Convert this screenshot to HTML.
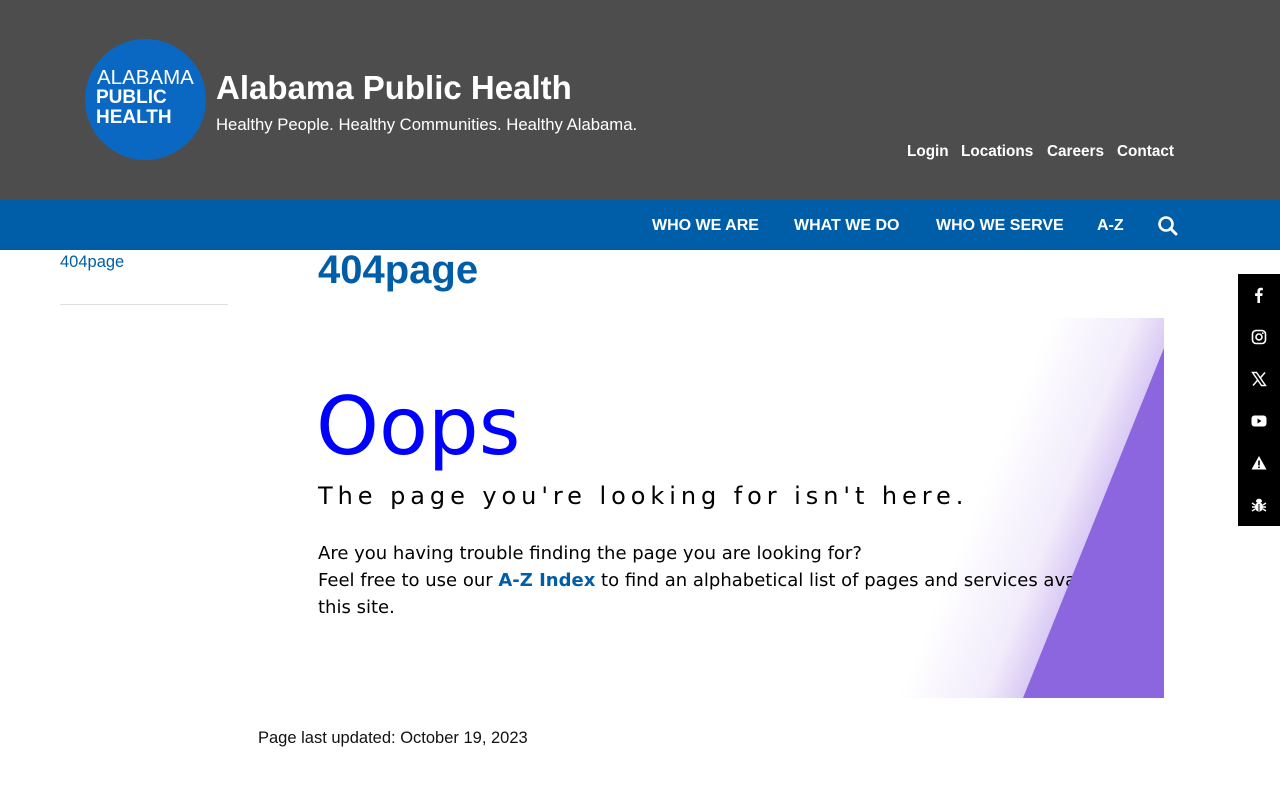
<!DOCTYPE html>
<html><head><meta charset="utf-8"><style>
*{margin:0;padding:0;box-sizing:border-box}
body{width:1280px;height:800px;position:relative;background:#fff;font-family:"Liberation Sans",sans-serif;overflow:hidden}
.abs{position:absolute;white-space:nowrap}
#hdr{position:absolute;left:0;top:0;width:1280px;height:200px;background:#4d4d4d}
#nav{position:absolute;left:0;top:200px;width:1280px;height:50px;background:#005ea8}
.logo{left:85px;top:39px;width:121px;height:121px;border-radius:50%;background:#0a68c2;position:absolute}
.w{color:#fff}
.nav{color:#fff;font-weight:bold;font-size:16px;top:217px}
.top{color:#fff;font-weight:bold;font-size:15.3px;top:143px}
.dv{font-family:"DejaVu Sans",sans-serif}
#art{position:absolute;left:318px;top:318px;width:846px;height:380px;background:linear-gradient(111.9deg,#fff 0,#fff 680px,#f1ebfb 760px,#d6c6f3 800px,#d6c6f3 100%)}
#purp{position:absolute;left:318px;top:318px;width:846px;height:380px;background:#8c66de;clip-path:polygon(846px 30px,846px 380px,705px 380px)}
#soc{position:absolute;left:1238px;top:274px;width:42px;height:252px;background:#000}
#soc svg{position:absolute;left:13px}
</style></head><body>
<div id="hdr"></div>
<div class="logo"></div>
<div class="abs w" style="left:97px;top:66px;font-size:20.5px">ALABAMA</div>
<div class="abs w" style="left:96px;top:87px;font-size:19px;font-weight:bold">PUBLIC</div>
<div class="abs w" style="left:96px;top:107px;font-size:19px;font-weight:bold">HEALTH</div>
<div class="abs w" style="left:216px;top:69px;font-size:33px;font-weight:bold">Alabama Public Health</div>
<div class="abs w" style="left:216px;top:115px;font-size:16.7px">Healthy People. Healthy Communities. Healthy Alabama.</div>
<div class="abs top" style="left:907px">Login</div>
<div class="abs top" style="left:961px">Locations</div>
<div class="abs top" style="left:1047px">Careers</div>
<div class="abs top" style="left:1117px">Contact</div>
<div id="nav"></div>
<div class="abs nav" style="left:652px">WHO WE ARE</div>
<div class="abs nav" style="left:794px">WHAT WE DO</div>
<div class="abs nav" style="left:936px">WHO WE SERVE</div>
<div class="abs nav" style="left:1097px">A-Z</div>
<svg class="abs" style="left:1157px;top:215px" width="22" height="22" viewBox="0 0 22 22"><circle cx="9" cy="9" r="6.5" fill="none" stroke="#fff" stroke-width="2.6"/><line x1="13.5" y1="13.5" x2="19" y2="19" stroke="#fff" stroke-width="3" stroke-linecap="round"/></svg>
<div class="abs" style="left:60px;top:253px;font-size:16.5px;color:#005ea8">404page</div>
<div style="position:absolute;left:60px;top:304px;width:168px;height:1px;background:#ddd"></div>
<div class="abs" style="left:318px;top:248px;font-size:40px;font-weight:bold;color:#005ea8">404page</div>
<div id="art"></div>
<div class="abs dv" style="left:316px;top:380px;font-size:80px;color:#0000ff">Oops</div>
<div class="abs dv" style="left:318px;top:482px;font-size:24px;letter-spacing:4.95px;color:#000">The page you're looking for isn't here.</div>
<div class="abs dv" style="left:318px;top:540px;font-size:18px;color:#000;line-height:27px;width:846px;white-space:normal">Are you having trouble finding the page you are looking for?<br>Feel free to use our <b style="color:#005ea8">A-Z Index</b> to find an alphabetical list of pages and services available on<br>this site.</div>
<div id="purp"></div>
<div class="abs" style="left:258px;top:729px;font-size:16.5px;color:#111">Page last updated: October 19, 2023</div>
<div id="soc">
<svg style="top:13px" width="16" height="16" viewBox="0 0 16 16"><path d="M9 16V9h2.3l.4-2.7H9V4.6c0-.8.3-1.3 1.4-1.3h1.4V.9C11.5.8 10.7.7 9.8.7 7.8.7 6.4 1.9 6.4 4.2v2.1H4.1V9h2.3v7z" fill="#fff"/></svg>
<svg style="top:55px" width="16" height="16" viewBox="0 0 16 16"><rect x="1.5" y="1.5" width="13" height="13" rx="3.5" fill="none" stroke="#fff" stroke-width="1.6"/><circle cx="8" cy="8" r="3" fill="none" stroke="#fff" stroke-width="1.6"/><circle cx="11.8" cy="4.2" r=".9" fill="#fff"/></svg>
<svg style="top:97px" width="16" height="16" viewBox="0 0 16 16"><path d="M1.5 1.5h4l9 13h-4z" fill="none" stroke="#fff" stroke-width="1.4"/><path d="M14 1.5L9 7.3M2 14.5l5-5.8" stroke="#fff" stroke-width="1.5"/></svg>
<svg style="top:139px" width="16" height="16" viewBox="0 0 16 16"><rect x=".5" y="2.5" width="15" height="11" rx="3" fill="#fff"/><path d="M6.5 5.5v5l4-2.5z" fill="#000"/></svg>
<svg style="top:181px" width="16" height="16" viewBox="0 0 16 16"><path d="M8 1l7.5 13.5H.5z" fill="#fff"/><rect x="7.2" y="5.5" width="1.6" height="5" fill="#000"/><rect x="7.2" y="11.5" width="1.6" height="1.6" fill="#000"/></svg>
<svg style="top:223px" width="16" height="16" viewBox="0 0 16 16"><ellipse cx="8" cy="4" rx="3" ry="2.2" fill="#fff"/><rect x="4" y="5.5" width="8" height="9" rx="4" fill="#fff"/><path d="M1 6l3 2M15 6l-3 2M1 10h3M15 10h-3M1 14l3-2M15 14l-3-2" stroke="#fff" stroke-width="1.4"/><line x1="8" y1="7" x2="8" y2="14" stroke="#000" stroke-width="1"/></svg>
</div>
</body></html>
